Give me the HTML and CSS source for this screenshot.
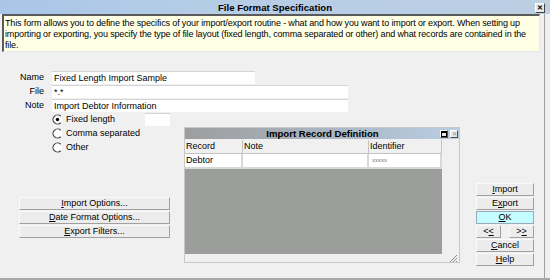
FILE: index.html
```html
<!DOCTYPE html>
<html lang="en">
<head>
    <meta charset="UTF-8">
    <title>File Format Specification</title>
    <link rel="stylesheet" href="styles.css">
</head>
<body>
    <div class="dialog">
        <!-- Caption -->
        <div class="titlebar">
            <span class="title">File Format Specification</span>
            <span class="cap-btn">&#x2715;</span>
        </div>

        <div class="client">
            <!-- Help text -->
            <div class="info">
                This form allows you to define the specifics of your import/export routine - what and how you want to import or export. When setting up<br>
                importing or exporting, you specify the type of file layout (fixed length, comma separated or other) and what records are contained in the<br>
                file.
            </div>

            <div class="fields">
                <div class="field">
                    <span class="label">Name</span>
                    <div class="input input-short">Fixed Length Import Sample</div>
                </div>
                <div class="field">
                    <span class="label">File</span>
                    <div class="input input-long">*.*</div>
                </div>
                <div class="field">
                    <span class="label">Note</span>
                    <div class="input input-long">Import Debtor Information</div>
                </div>
            </div>

            <div class="lower">
                <div class="left-col">
                    <div class="radios">
                        <div class="radio">
                            <svg class="radio-icon" width="11" height="11" viewBox="0 0 11 11"><circle cx="5.5" cy="5.5" r="4.5" fill="#fff"/><path d="M8.7 2.3A4.5 4.5 0 1 0 8.7 8.7" fill="none" stroke="#404040" stroke-width="1.2"/><circle cx="5.5" cy="5.5" r="1.7" fill="#000"/></svg>
                            <span>Fixed length</span>
                            <div class="input input-len"></div>
                        </div>
                        <div class="radio">
                            <svg class="radio-icon" width="11" height="11" viewBox="0 0 11 11"><circle cx="5.5" cy="5.5" r="4.5" fill="#fff"/><path d="M8.7 2.3A4.5 4.5 0 1 0 8.7 8.7" fill="none" stroke="#404040" stroke-width="1.2"/></svg>
                            <span>Comma separated</span>
                        </div>
                        <div class="radio">
                            <svg class="radio-icon" width="11" height="11" viewBox="0 0 11 11"><circle cx="5.5" cy="5.5" r="4.5" fill="#fff"/><path d="M8.7 2.3A4.5 4.5 0 1 0 8.7 8.7" fill="none" stroke="#404040" stroke-width="1.2"/></svg>
                            <span>Other</span>
                        </div>
                    </div>

                    <div class="option-buttons">
                        <div class="btn"><u>I</u>mport Options...</div>
                        <div class="btn"><u>D</u>ate Format Options...</div>
                        <div class="btn"><u>E</u>xport Filters...</div>
                    </div>
                </div>

                <!-- Child window -->
                <div class="child">
                    <div class="child-title">
                        <span class="child-caption">Import Record Definition</span>
                        <span class="child-btns">
                            <span class="mini-btn"><span class="max-glyph"></span></span>
                            <span class="mini-btn mini-close">&#x2715;</span>
                        </span>
                    </div>
                    <div class="grid">
                        <div class="grid-row grid-head">
                            <div class="cell">Record</div>
                            <div class="cell">Note</div>
                            <div class="cell">Identifier</div>
                        </div>
                        <div class="grid-row grid-data">
                            <div class="cell">Debtor</div>
                            <div class="cell"></div>
                            <div class="cell cell-id">xxxxx</div>
                        </div>
                        <div class="grid-empty"></div>
                    </div>
                    <div class="child-foot">
                        <svg class="grip" width="9" height="9" viewBox="0 0 9 9"><path d="M8 1L1 8M8 4L4 8M8 7L7 8" stroke="#909090" stroke-width="1"/></svg>
                    </div>
                </div>

                <div class="right-col">
                    <div class="btn"><u>I</u>mport</div>
                    <div class="btn">E<u>x</u>port</div>
                    <div class="btn btn-ok"><u>O</u>K</div>
                    <div class="nav-row">
                        <div class="btn btn-nav">&lt;<u>&lt;</u></div>
                        <div class="btn btn-nav">&gt;<u>&gt;</u></div>
                    </div>
                    <div class="btn"><u>C</u>ancel</div>
                    <div class="btn"><u>H</u>elp</div>
                </div>
            </div>
        </div>
    </div>
</body>
</html>
```

FILE: styles.css
```css
html, body {
    margin: 0;
    padding: 0;
}

body {
    background-color: #f0f0f0;
    font-family: "Liberation Sans", Arial, sans-serif;
    font-size: 9px;
    color: black;
}

.dialog {
    width: 550px;
    height: 280px;
    box-sizing: border-box;
    background-color: #f0f0f0;
    border-bottom: 2px solid #a8a8a8;
    display: flex;
    flex-direction: column;
    overflow: hidden;
}

/* Caption bar */
.titlebar {
    height: 14px;
    flex: none;
    background: linear-gradient(to right, #a9c6e8, #b6cde6 40%, #bccfe3);
    display: flex;
    align-items: center;
    justify-content: center;
    position: relative;
}

.title {
    font-weight: bold;
    font-size: 9.6px;
}

.cap-btn {
    position: absolute;
    right: 5px;
    top: 3px;
    width: 8px;
    height: 8px;
    background-color: #e8e8e8;
    border-top: 1px solid #fff;
    border-left: 1px solid #fff;
    border-right: 1px solid #404040;
    border-bottom: 1px solid #404040;
    font-size: 7px;
    font-weight: bold;
    line-height: 8px;
    text-align: center;
}

.client {
    flex: 1;
    width: 544px;
    border-right: 1px solid #a0a0a0;
    display: flex;
    flex-direction: column;
}

/* Help text box */
.info {
    margin-left: 2px;
    width: 538px;
    height: 38px;
    box-sizing: border-box;
    background-color: #ffffe6;
    border-top: 2px solid #5a5a5a;
    border-left: 2px solid #5a5a5a;
    border-right: 1px solid #e8e8e8;
    border-bottom: 1px solid #e8e8e8;
    padding: 2px 0 0 1px;
    line-height: 11px;
    letter-spacing: -0.14px;
    white-space: nowrap;
}

/* Name / File / Note */
.fields {
    margin-top: 18px;
}

.field {
    display: flex;
    align-items: center;
    height: 14px;
}

.label {
    width: 44px;
    text-align: right;
    margin-right: 8px;
}

.input {
    height: 13px;
    box-sizing: border-box;
    background-color: #fff;
    border-top: 1px solid #d4d4d4;
    padding-left: 2px;
    line-height: 12px;
    white-space: nowrap;
}

.input-short {
    width: 203px;
}

.input-long {
    width: 296px;
}

.input-len {
    width: 25px;
    margin-left: auto;
}

.lower {
    display: flex;
    align-items: flex-start;
}

.left-col {
    width: 184px;
    flex: none;
}

.radios {
    margin-left: 52px;
    width: 118px;
}

.radio {
    display: flex;
    align-items: center;
    height: 14px;
}

.radio-icon {
    margin-right: 3px;
}

.option-buttons {
    margin: 43px 0 0 19px;
    width: 151px;
}

/* Push buttons */
.btn {
    height: 13px;
    box-sizing: border-box;
    background-color: #ececec;
    border-top: 1px solid #fafafa;
    border-left: 1px solid #fafafa;
    border-right: 1px solid #a0a0a0;
    border-bottom: 1px solid #a0a0a0;
    margin-bottom: 1px;
    text-align: center;
    line-height: 11px;
}

.btn-ok {
    background-color: #c4fcff;
    border-color: #9ab;
}

/* Import Record Definition window */
.child {
    margin-top: 15px;
    width: 276px;
    height: 136px;
    box-sizing: border-box;
    border: 1px solid #c8c8c8;
    display: flex;
    flex-direction: column;
}

.child-title {
    height: 11px;
    flex: none;
    background: linear-gradient(to right, #9d9d9d, #a8b2bd 45%, #b9cde3);
    display: flex;
    align-items: center;
    padding-left: 20px;
}

.child-caption {
    flex: 1;
    text-align: center;
    font-weight: bold;
    font-size: 9.6px;
}

.child-btns {
    display: flex;
    gap: 2px;
    margin-right: 1px;
}

.mini-btn {
    width: 8px;
    height: 8px;
    box-sizing: border-box;
    background-color: #e8e8e8;
    border-top: 1px solid #fff;
    border-left: 1px solid #fff;
    border-right: 1px solid #505050;
    border-bottom: 1px solid #505050;
    display: flex;
    align-items: center;
    justify-content: center;
}

.max-glyph {
    width: 4px;
    height: 3px;
    border: 1px solid #000;
    border-top-width: 2px;
}

.mini-close {
    font-size: 6px;
    color: #909090;
    line-height: 6px;
}

.grid {
    width: 257px;
    margin-top: 1px;
    display: flex;
    flex-direction: column;
}

.grid-row {
    display: grid;
    grid-template-columns: 58px 126px 73px;
    height: 14px;
}

.cell {
    box-sizing: border-box;
    border-right: 1px solid #c4c4c4;
    border-bottom: 1px solid #c4c4c4;
    padding-left: 1px;
    line-height: 13px;
    white-space: nowrap;
    overflow: hidden;
}

.grid-data {
    height: 15px;
}

.grid-data .cell {
    background-color: #fff;
    border-right: 2px solid #d8d8d8;
    border-bottom: 2px solid #d8d8d8;
}

.cell-id {
    font-size: 6px;
    color: #707070;
    padding-left: 3px;
}

.grid-empty {
    height: 85px;
    background-color: #9c9e9b;
}

.child-foot {
    flex: 1;
    display: flex;
    justify-content: flex-end;
    align-items: flex-end;
}

.grip {
    margin: 0 1px 1px 0;
}

.right-col {
    margin: 71px 0 0 16px;
    width: 58px;
}

.nav-row {
    display: flex;
    justify-content: space-between;
}

.btn-nav {
    width: 25px;
}
```
